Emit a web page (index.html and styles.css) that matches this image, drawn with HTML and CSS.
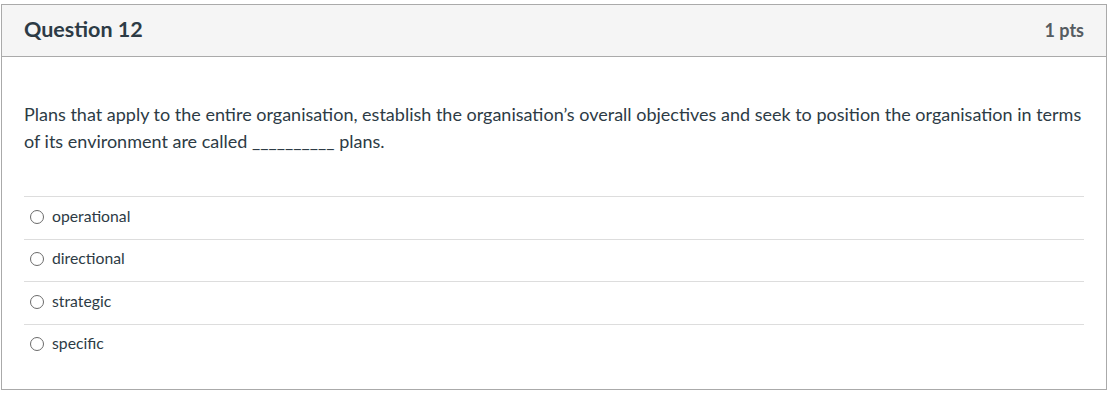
FILE: index.html
```html
<!DOCTYPE html>
<html>
<head>
<meta charset="utf-8">
<link rel="stylesheet" href="styles.css">
</head>
<body>
<div class="question">
  <div class="header">
    <h2 class="title">Question 12</h2>
    <span class="points">1 pts</span>
  </div>
  <div class="body">
    <p class="text">Plans that apply to the entire organisation, establish the organisation’s overall objectives and seek to position the organisation in terms of its environment are called __________ plans.</p>
    <div class="answers">
      <label class="answer"><span class="radio"></span><span class="label">operational</span></label>
      <label class="answer"><span class="radio"></span><span class="label">directional</span></label>
      <label class="answer"><span class="radio"></span><span class="label">strategic</span></label>
      <label class="answer"><span class="radio"></span><span class="label">specific</span></label>
    </div>
  </div>
</div>
</body>
</html>
```
FILE: styles.css
```css
html, body {
  margin: 0;
  padding: 0;
  background: #ffffff;
}
body {
  padding: 4px 0 0 1px;
  font-family: Lato, "Liberation Sans", sans-serif;
  color: #2d3b45;
}
.question {
  width: 1104px;
  border: 1px solid #aaaaaa;
}
.header {
  height: 51px;
  background: #f5f5f5;
  border-bottom: 1px solid #aaaaaa;
  display: flex;
  align-items: center;
  justify-content: space-between;
  padding: 0 22px;
}
.title {
  margin: 0 0 4px 0;
  font-size: 21.5px;
  font-weight: 700;
  color: #2d3b45;
}
.points {
  font-size: 18px;
  font-weight: 700;
  color: #555c61;
  margin-bottom: 2px;
}
.body {
  padding: 44px 22px 23px 22px;
}
.text {
  margin: 0;
  font-size: 18px;
  line-height: 27px;
}
.answers {
  margin-top: 41px;
}
.answer {
  display: flex;
  align-items: center;
  height: 37.5px;
  padding-bottom: 4px;
  border-top: 1px solid #dddddd;
  padding-left: 6px;
  font-size: 15.75px;
}
.radio {
  width: 12px;
  height: 12px;
  border: 1px solid #6b6b6b;
  border-radius: 50%;
  margin-right: 8px;
  margin-top: 2px;
  flex: none;
}
.label {
  line-height: 20px;
}
```
